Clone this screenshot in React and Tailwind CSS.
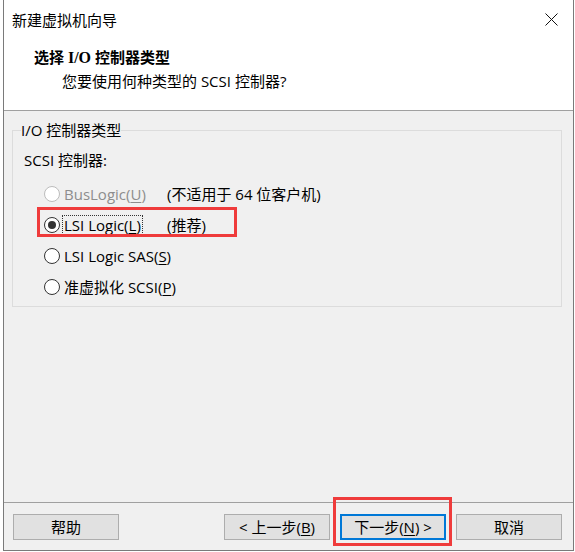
import React from 'react';

const Radio = ({ checked, disabled }) => (
  <span
    className={`flex items-center justify-center w-[16px] h-[16px] shrink-0 rounded-full border bg-white ${
      disabled ? 'border-[#bcbcbc]' : 'border-[#333333]'
    }`}
  >
    {checked && <span className="w-[8px] h-[8px] rounded-full bg-[#333333]" />}
  </span>
);

const Mn = ({ children }) => <span className="underline underline-offset-[2px]">{children}</span>;

const options = [
  { key: 'bus', label: <>BusLogic(<Mn>U</Mn>)</>, note: '(不适用于 64 位客户机)', disabled: true },
  { key: 'lsi', label: <>LSI Logic(<Mn>L</Mn>)</>, note: '(推荐)', checked: true },
  { key: 'sas', label: <>LSI Logic SAS(<Mn>S</Mn>)</> },
  { key: 'pv', label: <>准虚拟化 SCSI(<Mn>P</Mn>)</> },
];

const Button = ({ children, primary }) => (
  <button
    className={`w-[106px] h-[26px] flex items-center justify-center whitespace-nowrap bg-[#e1e1e1] ${
      primary ? 'border-2 border-[#0078d7]' : 'border border-[#adadad]'
    }`}
  >
    {children}
  </button>
);

export default function App() {
  return (
    <div className="relative w-[575px] h-[552px] bg-white text-[15px] leading-[20px] text-black font-['Open_Sans','Noto_Sans_CJK_SC',sans-serif]">
      <div className="ml-[3px] w-[571px] h-[551px] flex flex-col border-x border-b border-[#7a7a7a] bg-white">
        {/* Title bar */}
        <div className="h-[40px] flex items-center justify-between pl-[8px] pr-[15px]">
          <span>新建虚拟机向导</span>
          <svg width="13" height="13" viewBox="0 0 13 13" className="mt-[-2px]">
            <path d="M0.5 0.5 L12.5 12.5 M12.5 0.5 L0.5 12.5" stroke="#111" strokeWidth="1" fill="none" />
          </svg>
        </div>

        {/* Header */}
        <div className="h-[70px] pl-[30px] pt-[7px]">
          <div className="font-bold">
            选择 <span className="font-['Liberation_Serif',serif] text-[16px]">I/O</span> 控制器类型
          </div>
          <div className="pl-[28px] mt-[3px]">您要使用何种类型的 SCSI 控制器?</div>
        </div>
        <div className="h-px bg-[#a0a0a0]" />

        {/* Body */}
        <div className="flex-1 bg-[#f0f0f0] pt-[9px]">
          <fieldset className="ml-[8px] w-[550px] border border-[#dcdcdc] pl-[8px] pb-[4px]">
            <legend className="px-0">I/O 控制器类型</legend>
            <div className="ml-[3px] mt-[10px]">SCSI 控制器:</div>
            <div className="mt-[8px]">
              {options.map((o) => (
                <div key={o.key} className="h-[31px] flex items-center pl-[23px] whitespace-nowrap">
                  <Radio checked={o.checked} disabled={o.disabled} />
                  <div className="min-w-[105px] ml-[2px] shrink-0">
                    <span
                      className={`inline-block px-px leading-[18px] border ${
                        o.checked ? 'border-dotted border-[#333333]' : 'border-transparent'
                      } ${o.disabled ? 'text-[#8d8d8d]' : ''}`}
                    >
                      {o.label}
                    </span>
                  </div>
                  {o.note && <span>{o.note}</span>}
                </div>
              ))}
            </div>
          </fieldset>
        </div>
        <div className="h-px bg-[#a0a0a0]" />

        {/* Footer */}
        <div className="h-[47px] bg-[#f0f0f0] flex pt-[11px] pl-[9px] pr-[11px]">
          <Button>帮助</Button>
          <div className="flex-1" />
          <Button>
            &lt; 上一步(<Mn>B</Mn>)
          </Button>
          <div className="w-[10px]" />
          <Button primary>
            下一步(<Mn>N</Mn>) &gt;
          </Button>
          <div className="w-[10px]" />
          <Button>取消</Button>
        </div>
      </div>

      {/* Annotation boxes */}
      <div className="absolute left-[37px] top-[207px] w-[200px] h-[30px] border-[3px] border-[#ef3b3b]" />
      <div className="absolute left-[333px] top-[497px] w-[119px] h-[49px] border-[3px] border-[#ef3b3b]" />
    </div>
  );
}
